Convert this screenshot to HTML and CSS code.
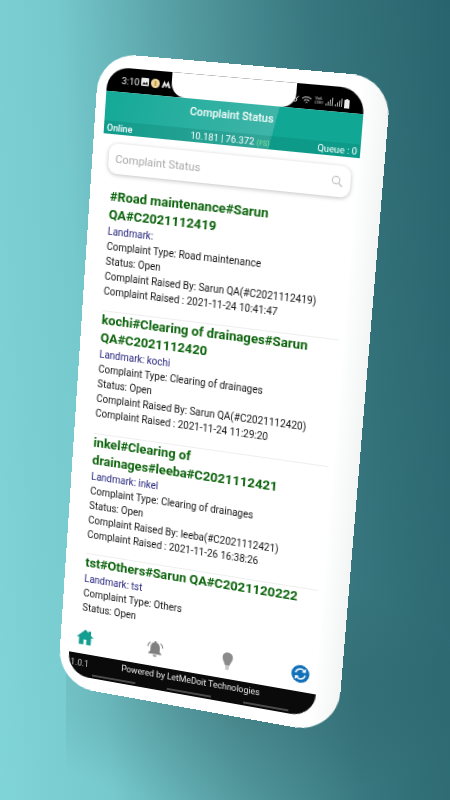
FILE: index.html

```html
<!DOCTYPE html>
<html lang="en">
<head>
  <meta charset="UTF-8">
  <meta name="viewport" content="width=device-width, initial-scale=1.0">
  <title>Complaint Status</title>
  <link rel="stylesheet" href="styles.css">
</head>
<body>
  <div class="shade"></div>
  <div class="phone">
    <div class="screen">
      <div class="notch"></div>
      <div class="status-bar">
        <div class="status-left">
          <span>3:10</span>
          <svg width="8" height="8" viewBox="0 0 8 8"><rect width="8" height="8" rx="1" fill="#e8e8e8"/><path d="M1 6.5 3 4l1.5 1.5L6 3.5l1 3z" fill="#222"/></svg>
          <svg width="9" height="9" viewBox="0 0 9 9"><circle cx="4.5" cy="4.5" r="4.5" fill="#f0d9a0"/><rect x="3.6" y="2" width="1.8" height="5" fill="#c79a3c"/></svg>
          <svg width="9" height="7" viewBox="0 0 9 7"><path d="M0 7 2.5 0 4.5 4 6.5 0 9 7H7L6 4 4.5 7 3 4 2 7z" fill="#eee"/></svg>
        </div>
        <div class="status-right">
          <svg width="6" height="6" viewBox="0 0 6 6"><circle cx="2.2" cy="3.800" r="1.600" fill="none" stroke="#eee"/><path d="M3.400 2.600 5.600.4" stroke="#eee"/></svg>
          <svg width="11" height="9" viewBox="0 0 12 10"><path d="M1 3.500a7.500 7.500 0 0 1 10 0M3 5.600a4.600 4.600 0 0 1 6 0M5 7.600a1.600 1.600 0 0 1 2 0" fill="none" stroke="#eee" stroke-width="1"/></svg>
          <span class="volte">Vo6<br>LTE1</span>
          <svg width="7" height="8" viewBox="0 0 7 8"><path d="M0 8V6h1v2zM2 8V4h1v4zM4 8V2h1v6zM6 8V0h1v8z" fill="#aaa"/></svg>
          <svg width="7" height="8" viewBox="0 0 7 8"><path d="M0 8V6h1v2zM2 8V4h1v4zM4 8V2h1v6zM6 8V0h1v8z" fill="#aaa"/></svg>
          <svg width="5" height="9" viewBox="0 0 5 9"><path d="M1.500 0h2v1H5v8H0V1h1.500z" fill="#eee"/></svg>
        </div>
      </div>

      <div class="header">
        <div class="header-title">Complaint Status</div>
        <div class="header-strip">
          <span class="online">Online</span>
          <span class="coords">10.181 | 76.372 <em>(FS)</em></span>
          <span class="queue">Queue : 0</span>
        </div>
      </div>

      <div class="search">
        <span>Complaint Status</span>
        <svg width="12" height="12" viewBox="0 0 12 12"><circle cx="5" cy="5" r="3.700" fill="none" stroke="#bdbdbd" stroke-width="1"/><path d="M8 8l3.200 3.200" stroke="#bdbdbd" stroke-width="1.200"/></svg>
      </div>

      <div class="list">
        <div class="item">
          <h3>#Road maintenance#Sarun QA#C2021112419</h3>
          <p class="landmark">Landmark:</p>
          <p>Complaint Type: Road maintenance</p>
          <p>Status: Open</p>
          <p>Complaint Raised By: Sarun QA(#C2021112419)</p>
          <p>Complaint Raised : 2021-11-24 10:41:47</p>
        </div>
        <div class="item">
          <h3>kochi#Clearing of drainages#Sarun QA#C2021112420</h3>
          <p class="landmark">Landmark: kochi</p>
          <p>Complaint Type: Clearing of drainages</p>
          <p>Status: Open</p>
          <p>Complaint Raised By: Sarun QA(#C2021112420)</p>
          <p>Complaint Raised : 2021-11-24 11:29:20</p>
        </div>
        <div class="item">
          <h3>inkel#Clearing of drainages#leeba#C2021112421</h3>
          <p class="landmark">Landmark: inkel</p>
          <p>Complaint Type: Clearing of drainages</p>
          <p>Status: Open</p>
          <p>Complaint Raised By: leeba(#C2021112421)</p>
          <p>Complaint Raised : 2021-11-26 16:38:26</p>
        </div>
        <div class="item">
          <h3>tst#Others#Sarun QA#C2021120222</h3>
          <p class="landmark">Landmark: tst</p>
          <p>Complaint Type: Others</p>
          <p>Status: Open</p>
        </div>
      </div>

      <div class="nav">
        <svg width="18" height="18" viewBox="0 0 24 24"><path d="M12 2 0 13h3.500v10H10v-7h4v7h6.500V13H24l-4-3.700V3.500h-3.500v2.600z" fill="#139e90"/></svg>
        <svg width="18" height="18" viewBox="0 0 24 24"><path d="M12 1.500a1.700 1.700 0 0 1 1.700 1.800C17 4.300 18.500 7.200 18.500 11v4.500l2.500 2.500v1.300H3V18l2.500-2.500V11c0-3.800 1.500-6.700 4.800-7.700A1.700 1.700 0 0 1 12 1.500zM9.500 20.500h5a2.500 2.500 0 0 1-5 0z" fill="#808080"/><path d="M4.800 3.500A10 10 0 0 0 1.500 10M19.200 3.500A10 10 0 0 1 22.500 10" fill="none" stroke="#808080" stroke-width="1.300"/></svg>
        <svg width="18" height="18" viewBox="0 0 24 24"><path d="M12 0c4.500 0 7 3.200 7 7 0 4-2.800 6.500-4 11H9C7.800 13.500 5 11 5 7c0-3.800 2.500-7 7-7z" fill="#8b8b8b"/><path d="M9.500 18.500h5v3l-1 2.500h-3l-1-2.500z" fill="#c8c8c8"/></svg>
        <svg width="18" height="18" viewBox="0 0 24 24"><circle cx="12" cy="12" r="12" fill="#0f6fb8"/><path d="M5.500 11a6.600 6.600 0 0 1 11.300-3.600M18.500 13a6.600 6.600 0 0 1-11.300 3.600" fill="none" stroke="#fff" stroke-width="2"/><path d="M19 4v5.500h-5.500zM5 20v-5.500h5.500z" fill="#fff"/></svg>
      </div>

      <div class="footer">
        <span class="version">1.0.1</span>
        <span class="powered">Powered by LetMeDoit Technologies</span>
        <div class="softkeys"><i></i><i></i><i></i></div>
      </div>
    </div>
  </div>
</body>
</html>
```

FILE: styles.css

```css
body {
  margin: 0;
  width: 450px;
  height: 800px;
  overflow: hidden;
  position: relative;
  font-family: Roboto, 'Noto Sans', sans-serif;
  background: linear-gradient(86deg, #80d5d8 0%, #76c9cd 22%, #539a9f 48%, #38777f 72%, #28646d 100%);
}
.shade {
  position: absolute;
  left: 66px;
  top: 570px;
  width: 384px;
  height: 230px;
  background: radial-gradient(ellipse 240px 115px at 170px 120px, rgba(30, 70, 75, 0.3), rgba(30, 70, 75, 0));
}
/* the flat phone is tilted with one matrix, the corners were measured on the shot */
.phone {
  position: absolute;
  left: 0;
  top: 0;
  box-sizing: border-box;
  width: 290px;
  height: 646px;
  padding: 13px 24px 13px 10px;
  background: linear-gradient(90deg, #ffffff 90%, #f3f5f5 100%);
  border-radius: 38px 38px 44px 38px;
  transform-origin: 0 0;
  transform: matrix3d(0.9532, 0.07555, 0, -0.00014301, -0.06113, 1.02023, 0, 0.00005969, 0, 0, 1, 0, 108, 66.4, 0, 1) translate(-10px, -13px);
}
.screen {
  position: relative;
  width: 256px;
  height: 620px;
  border-radius: 22px 24px 24px 22px;
  overflow: hidden;
  background: #fff;
  display: flex;
  flex-direction: column;
}
.notch {
  position: absolute;
  left: 66px;
  top: 0;
  width: 124px;
  height: 24px;
  background: #fff;
  border-radius: 0 0 14px 14px;
}
.status-bar {
  height: 24px;
  flex: none;
  background: #000;
  color: #e8e8e8;
  font-size: 9.500px;
  display: flex;
  justify-content: space-between;
  align-items: center;
  padding: 0 14px 0 15px;
}
.status-left, .status-right {
  display: flex;
  align-items: center;
  gap: 2px;
}
.status-right {
  margin-top: 6px;
}
.volte {
  font-size: 4px;
  line-height: 4px;
  color: #ddd;
}
.header {
  flex: none;
  height: 42px;
  display: flex;
  flex-direction: column;
  color: #fff;
  background: linear-gradient(101deg, #14a998 0%, #3fb5a8 66%, #10a794 66.3%);
}
.header-title {
  flex: 1;
  display: flex;
  justify-content: center;
  align-items: center;
  font-size: 10.800px;
  font-weight: 500;
  padding-bottom: 5px;
}
.header-strip {
  height: 13px;
  display: grid;
  grid-template-columns: 1fr auto 1fr;
  align-items: center;
  padding: 0 3px;
  font-size: 9.300px;
  background: rgba(5, 110, 95, 0.22);
}
.online {
  font-weight: 500;
}
.queue {
  text-align: right;
}
.coords em {
  font-style: normal;
  font-size: 7px;
  color: #7be896;
}
.search {
  flex: none;
  height: 30px;
  margin: 9px 7px 0;
  padding: 0 7px;
  border-radius: 9px;
  background: #fff;
  box-shadow: 0 1px 4px rgba(0, 0, 0, 0.25);
  display: flex;
  justify-content: space-between;
  align-items: center;
  font-size: 11.300px;
  color: #a8a8a8;
}
.list {
  flex: 1;
  overflow: hidden;
  padding: 13.500px 6px 0 11px;
}
.item {
  height: 123.500px;
  border-bottom: 1px solid #eeeeee;
}
.item:last-child {
  border-bottom: none;
}
.item h3 {
  margin: 0;
  font-size: 13.200px;
  line-height: 18px;
  font-weight: 700;
  color: #0a620a;
}
.item p {
  margin: 0;
  font-size: 10px;
  line-height: 15px;
  color: #111;
}
.item p.landmark {
  color: #1c1c78;
}
.nav {
  flex: none;
  height: 36px;
  display: flex;
  justify-content: space-between;
  align-items: center;
  padding: 0 8px 0 7px;
}
.footer {
  position: relative;
  flex: none;
  height: 24px;
  background: #0a0a0a;
  color: #e8e8e8;
}
.version {
  position: absolute;
  left: 2px;
  top: 5px;
  font-size: 9px;
  color: #c4c4c4;
}
.powered {
  display: block;
  text-align: center;
  font-size: 8.900px;
  padding: 3px 0 0 0;
}
.softkeys {
  position: absolute;
  left: 0;
  right: 0;
  bottom: 2px;
  display: flex;
  justify-content: space-around;
  padding: 0 10px;
}
.softkeys i {
  width: 46px;
  height: 2px;
  background: #4a4a4a;
}
```
